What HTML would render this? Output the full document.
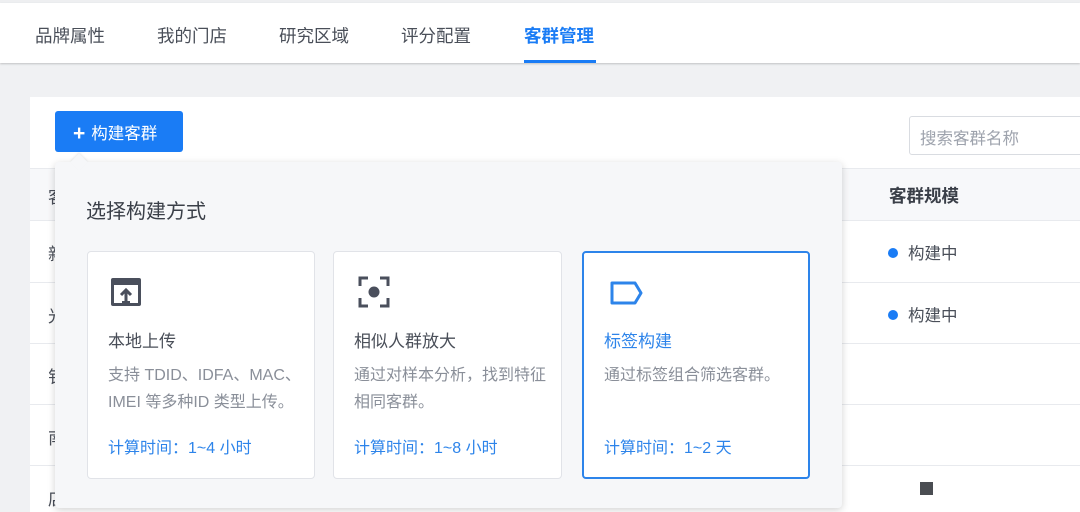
<!DOCTYPE html>
<html><head><meta charset="utf-8"><style>
*{margin:0;padding:0;box-sizing:border-box}
body{width:1080px;height:512px;overflow:hidden;background:#f0f1f3;font-family:"Liberation Sans","Noto Sans CJK SC",sans-serif;position:relative}
.a{position:absolute}
.nav{left:0;top:3px;width:1080px;height:60px;background:#fff;box-shadow:0 1px 2px rgba(0,0,0,.2)}
.tab{top:23px;font-size:17.5px;color:#4a4f59}
.panel{left:30px;top:97px;width:1050px;height:415px;background:#fff}
.line{left:30px;width:1050px;height:1px;background:#e8eaee}
.pop{left:55px;top:162px;width:787px;height:346px;background:#f6f7f9;border-radius:4px;box-shadow:0 2px 8px rgba(0,0,0,.18)}
.card{top:251px;height:228px;background:#fff;border:1px solid #e1e3e8;border-radius:4px}
.ct{font-size:17px;color:#4a4f59;position:absolute;left:20px;top:75px}
.cd{font-size:16px;color:#8a8f99;position:absolute;left:20px;top:110px;line-height:27px;white-space:nowrap}
.tm{font-size:16px;color:#2d84ea;position:absolute;left:20px;top:182px}
.st{font-size:16.5px;color:#4a4f59}
.dot{display:inline-block;width:10px;height:10px;border-radius:50%;background:#1a7cf5;margin-right:10px;vertical-align:1px}
</style></head><body>
<div class="a" style="left:0;top:0;width:1080px;height:3px;background:#eeeff1"></div>
<div class="a nav"></div>
<div class="a tab" style="left:35px">品牌属性</div>
<div class="a tab" style="left:157px">我的门店</div>
<div class="a tab" style="left:279px">研究区域</div>
<div class="a tab" style="left:401px">评分配置</div>
<div class="a tab" style="left:524px;color:#1a7cf5;font-weight:bold">客群管理</div>
<div class="a" style="left:524px;top:60px;width:72px;height:3px;background:#1a7cf5"></div>
<div class="a panel"></div>
<div class="a" style="left:30px;top:168px;width:1050px;height:52px;background:#f7f8fa"></div>
<div class="a line" style="top:168px"></div>
<div class="a line" style="top:220px"></div>
<div class="a line" style="top:282px"></div>
<div class="a line" style="top:343px"></div>
<div class="a line" style="top:404px"></div>
<div class="a line" style="top:465px"></div>
<div class="a" style="left:48px;top:183px;font-size:17px;color:#4a4f59">客</div>
<div class="a" style="left:48px;top:240px;font-size:17px;color:#4a4f59">新</div>
<div class="a" style="left:48px;top:302px;font-size:17px;color:#4a4f59">光</div>
<div class="a" style="left:48px;top:363px;font-size:17px;color:#4a4f59">钅</div>
<div class="a" style="left:48px;top:424px;font-size:17px;color:#4a4f59">南</div>
<div class="a" style="left:48px;top:485px;font-size:17px;color:#4a4f59">店</div>
<div class="a" style="left:889px;top:183px;font-size:17.5px;font-weight:bold;color:#3a3f48">客群规模</div>
<div class="a st" style="left:888px;top:240px"><span class="dot"></span>构建中</div>
<div class="a st" style="left:888px;top:302px"><span class="dot"></span>构建中</div>
<div class="a" style="left:920px;top:482px;width:13px;height:13px;background:#4a4d52"></div>
<div class="a" style="left:909px;top:116px;width:180px;height:39px;border:1px solid #d9dce1;border-radius:3px;background:#fff;font-size:16.5px;color:#9ea3ad;padding:8px 10px">搜索客群名称</div>
<div class="a" style="left:55px;top:111px;width:128px;height:41px;background:#1a7cf5;border-radius:3px;color:#fff;font-size:16.5px;padding:9px 0 0 18px"><span style="font-size:21px;font-weight:bold;vertical-align:-1px;margin-right:6px">+</span>构建客群</div>
<div class="a pop"></div>
<div class="a" style="left:73px;top:156px;width:12px;height:12px;background:#f6f7f9;transform:rotate(45deg);box-shadow:-1px -1px 2px rgba(0,0,0,.08)"></div>
<div class="a" style="left:86px;top:195px;font-size:20px;color:#3a3f48">选择构建方式</div>
<div class="a card" style="left:87px;width:228px">
<svg class="a" style="left:22px;top:25px" width="32" height="32" viewBox="0 0 32 32"><rect x="1" y="1" width="30" height="28" rx="2" fill="#4a4f5c"/><rect x="4" y="8" width="24" height="18" fill="#fff"/><rect x="12" y="24" width="8" height="5" fill="#4a4f5c"/><path d="M16 27V13M11 18l5-5 5 5" stroke="#4a4f5c" stroke-width="3" fill="none"/></svg>
<div class="ct">本地上传</div>
<div class="cd">支持 TDID、IDFA、MAC、<br>IMEI 等多种ID 类型上传。</div>
<div class="tm">计算时间：1~4 小时</div></div>
<div class="a card" style="left:333px;width:229px">
<svg class="a" style="left:24px;top:24px" width="32" height="32" viewBox="0 0 32 32"><path d="M2 10V2h8M22 2h8v8M30 22v8h-8M10 30H2v-8" stroke="#4a4f5c" stroke-width="3" fill="none"/><circle cx="16" cy="16" r="5.5" fill="#4a4f5c"/></svg>
<div class="ct">相似人群放大</div>
<div class="cd">通过对样本分析，找到特征<br>相同客群。</div>
<div class="tm">计算时间：1~8 小时</div></div>
<div class="a card" style="left:582px;width:228px;border:2px solid #2d84ea">
<svg class="a" style="left:25px;top:27px" width="36" height="26" viewBox="0 0 36 26"><path d="M3 3H26L32 13L26 23H3Z" stroke="#2d84ea" stroke-width="3" fill="none" stroke-linejoin="round"/></svg>
<div class="ct" style="color:#2d84ea;left:20px;top:74px">标签构建</div>
<div class="cd" style="left:20px;top:109px">通过标签组合筛选客群。</div>
<div class="tm" style="top:181px">计算时间：1~2 天</div></div>
</body></html>
